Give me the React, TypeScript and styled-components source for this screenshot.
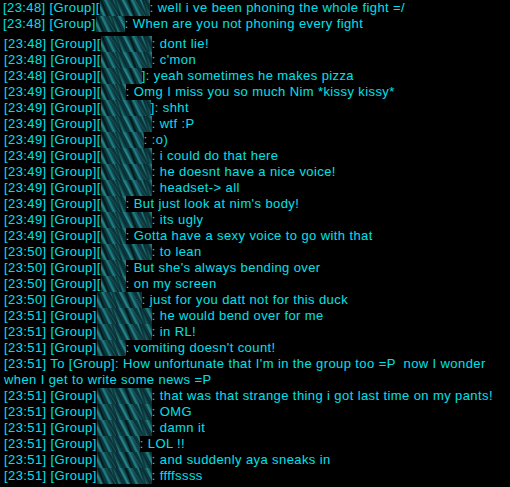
import React from 'react';
import styled, { createGlobalStyle } from 'styled-components';

const GlobalStyle = createGlobalStyle`
  html, body {
    margin: 0;
    padding: 0;
    background: #000;
  }
`;

const Log = styled.div`
  width: 510px;
  height: 487px;
  overflow: hidden;
  background: #000;
  color: #00e0ea;
  font-family: 'Liberation Sans', Arial, sans-serif;
  font-size: 13px;
  letter-spacing: 0.4px;
  line-height: 16px;
`;

const Block = styled.div<{ $indent: number; $gap?: number }>`
  padding-left: ${(p) => p.$indent}px;
  margin-top: ${(p) => p.$gap || 0}px;
`;

const Line = styled.div`
  height: 16px;
  white-space: pre;
`;

// the smudged-out player names
const Smudge = styled.span<{ $w: number }>`
  display: inline-block;
  vertical-align: top;
  width: ${(p) => p.$w}px;
  height: 16px;
  background:
    repeating-linear-gradient(
      70deg,
      rgba(0, 0, 0, 0) 0 5px,
      rgba(0, 0, 0, 0.5) 6px 7px,
      rgba(0, 0, 0, 0) 8px 13px
    ),
    repeating-linear-gradient(
      58deg,
      rgba(0, 0, 0, 0) 0 4px,
      rgba(70, 175, 180, 0.25) 5px,
      rgba(0, 0, 0, 0) 6px 11px
    ),
    repeating-linear-gradient(
      64deg,
      #0a363b 0 2px,
      #1a6a70 3px,
      #238187 4px,
      #0e474d 6px,
      #06262a 8px
    );
`;

type Msg = {
  time: string;
  open: boolean; // "[Group][" vs "[Group]"
  end: number;
  text: string;
};

const top: Msg[] = [
  { time: '23:48', open: true, end: 152, text: ': well i ve been phoning the whole fight =/' },
  { time: '23:48', open: false, end: 127, text: ': When are you not phoning every fight' },
];

const rest: Msg[] = [
  { time: '23:48', open: true, end: 153, text: ': dont lie!' },
  { time: '23:48', open: true, end: 153, text: ": c'mon" },
  { time: '23:48', open: true, end: 143, text: ']: yeah sometimes he makes pizza' },
  { time: '23:49', open: true, end: 127, text: ': Omg I miss you so much Nim *kissy kissy*' },
  { time: '23:49', open: true, end: 152, text: ']: shht' },
  { time: '23:49', open: true, end: 153, text: ': wtf :P' },
  { time: '23:49', open: true, end: 145, text: ': :o)' },
  { time: '23:49', open: true, end: 153, text: ': i could do that here' },
  { time: '23:49', open: true, end: 153, text: ': he doesnt have a nice voice!' },
  { time: '23:49', open: true, end: 153, text: ': headset-> all' },
  { time: '23:49', open: true, end: 127, text: ": But just look at nim's body!" },
  { time: '23:49', open: true, end: 153, text: ': its ugly' },
  { time: '23:49', open: true, end: 127, text: ': Gotta have a sexy voice to go with that' },
  { time: '23:50', open: true, end: 153, text: ': to lean' },
  { time: '23:50', open: true, end: 127, text: ": But she's always bending over" },
  { time: '23:50', open: true, end: 127, text: ': on my screen' },
  { time: '23:50', open: false, end: 143, text: ': just for you datt not for this duck' },
  { time: '23:51', open: false, end: 153, text: ': he would bend over for me' },
  { time: '23:51', open: false, end: 153, text: ': in RL!' },
  { time: '23:51', open: false, end: 127, text: ": vomiting doesn't count!" },
];

const tail: Msg[] = [
  { time: '23:51', open: false, end: 153, text: ': that was that strange thing i got last time on my pants!' },
  { time: '23:51', open: false, end: 153, text: ': OMG' },
  { time: '23:51', open: false, end: 153, text: ': damn it' },
  { time: '23:51', open: false, end: 141, text: ': LOL !!' },
  { time: '23:51', open: false, end: 153, text: ': and suddenly aya sneaks in' },
  { time: '23:51', open: false, end: 153, text: ': ffffssss' },
];

const ChatLine = ({ m }: { m: Msg }) => {
  const start = m.open ? 102 : 98;
  return (
    <Line>
      [{m.time}] {m.open ? '[Group][' : '[Group]'}
      <Smudge $w={m.end - start} />
      {m.text}
    </Line>
  );
};

const App = () => {
  return (
    <Log>
      <GlobalStyle />
      <Block $indent={3}>
        {top.map((m, i) => (
          <ChatLine key={i} m={m} />
        ))}
      </Block>
      <Block $indent={4} $gap={4}>
        {rest.map((m, i) => (
          <ChatLine key={i} m={m} />
        ))}
        <Line>[23:51] To [Group]: How unfortunate that I'm in the group too =P  now I wonder</Line>
        <Line>when I get to write some news =P</Line>
        {tail.map((m, i) => (
          <ChatLine key={i} m={m} />
        ))}
      </Block>
    </Log>
  );
};

export default App;
